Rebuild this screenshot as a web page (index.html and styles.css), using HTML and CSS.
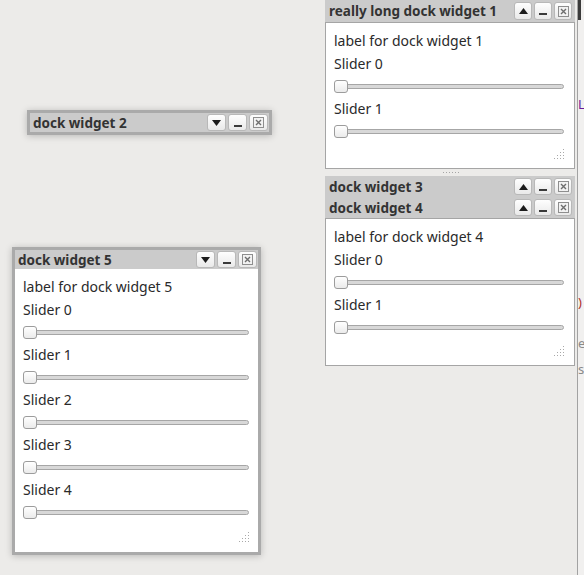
FILE: index.html
```html
<!DOCTYPE html>
<html>
<head>
<meta charset="utf-8">
<link rel="stylesheet" href="styles.css">
</head>
<body>
<div class="screen">
  <div class="main">
    <div class="central"></div>
    <div class="dock-area">
      <section class="dock dock-1">
        <header class="titlebar">
          <span class="title">really long dock widget 1</span>
          <div class="buttons">
            <span class="btn"><svg width="9" height="6" viewBox="0 0 9 6"><path d="M0 6L4.5 0L9 6Z" fill="#1c1c1c"/></svg></span>
            <span class="btn"><svg width="8" height="8" viewBox="0 0 8 8"><rect x="0" y="6" width="8" height="2" fill="#3a3a3a"/></svg></span>
            <span class="btn"><svg width="11" height="11" viewBox="0 0 11 11"><rect x="0.5" y="0.5" width="10" height="10" fill="#f2f2f2" stroke="#8e8e8e"/><path d="M3 3L8 8M8 3L3 8" stroke="#6e6e6e" stroke-width="1.4"/></svg></span>
          </div>
        </header>
        <div class="content">
          <div class="label">label for dock widget 1</div>
          <div class="label">Slider 0</div>
          <div class="slider"><div class="track"></div><div class="handle"></div></div>
          <div class="label">Slider 1</div>
          <div class="slider"><div class="track"></div><div class="handle"></div></div>
          <svg class="grip" width="11" height="11" viewBox="0 0 11 11"><g fill="#a9a9a9"><rect x="10" y="1" width="1" height="1"/><rect x="7" y="4" width="1" height="1"/><rect x="10" y="4" width="1" height="1"/><rect x="4" y="7" width="1" height="1"/><rect x="7" y="7" width="1" height="1"/><rect x="10" y="7" width="1" height="1"/><rect x="1" y="10" width="1" height="1"/><rect x="4" y="10" width="1" height="1"/><rect x="7" y="10" width="1" height="1"/><rect x="10" y="10" width="1" height="1"/></g></svg>
        </div>
      </section>
      <div class="splitter"><span class="dots"></span></div>
      <section class="dock dock-3">
        <header class="titlebar">
          <span class="title">dock widget 3</span>
          <div class="buttons">
            <span class="btn"><svg width="9" height="6" viewBox="0 0 9 6"><path d="M0 6L4.5 0L9 6Z" fill="#1c1c1c"/></svg></span>
            <span class="btn"><svg width="8" height="8" viewBox="0 0 8 8"><rect x="0" y="6" width="8" height="2" fill="#3a3a3a"/></svg></span>
            <span class="btn"><svg width="11" height="11" viewBox="0 0 11 11"><rect x="0.5" y="0.5" width="10" height="10" fill="#f2f2f2" stroke="#8e8e8e"/><path d="M3 3L8 8M8 3L3 8" stroke="#6e6e6e" stroke-width="1.4"/></svg></span>
          </div>
        </header>
      </section>
      <section class="dock dock-4">
        <header class="titlebar">
          <span class="title">dock widget 4</span>
          <div class="buttons">
            <span class="btn"><svg width="9" height="6" viewBox="0 0 9 6"><path d="M0 6L4.5 0L9 6Z" fill="#1c1c1c"/></svg></span>
            <span class="btn"><svg width="8" height="8" viewBox="0 0 8 8"><rect x="0" y="6" width="8" height="2" fill="#3a3a3a"/></svg></span>
            <span class="btn"><svg width="11" height="11" viewBox="0 0 11 11"><rect x="0.5" y="0.5" width="10" height="10" fill="#f2f2f2" stroke="#8e8e8e"/><path d="M3 3L8 8M8 3L3 8" stroke="#6e6e6e" stroke-width="1.4"/></svg></span>
          </div>
        </header>
        <div class="content">
          <div class="label">label for dock widget 4</div>
          <div class="label">Slider 0</div>
          <div class="slider"><div class="track"></div><div class="handle"></div></div>
          <div class="label">Slider 1</div>
          <div class="slider"><div class="track"></div><div class="handle"></div></div>
          <svg class="grip" width="11" height="11" viewBox="0 0 11 11"><g fill="#a9a9a9"><rect x="10" y="1" width="1" height="1"/><rect x="7" y="4" width="1" height="1"/><rect x="10" y="4" width="1" height="1"/><rect x="4" y="7" width="1" height="1"/><rect x="7" y="7" width="1" height="1"/><rect x="10" y="7" width="1" height="1"/><rect x="1" y="10" width="1" height="1"/><rect x="4" y="10" width="1" height="1"/><rect x="7" y="10" width="1" height="1"/><rect x="10" y="10" width="1" height="1"/></g></svg>
        </div>
      </section>
    </div>
    <div class="gutter"></div>
    <div class="edge">
      <div class="edge-top"></div>
      <div class="frag frag-li">Li</div>
      <div class="frag frag-paren">)</div>
      <div class="frag frag-e">e</div>
      <div class="frag frag-s">s</div>
    </div>
  </div>

  <section class="floating float-2">
    <header class="titlebar">
      <span class="title">dock widget 2</span>
      <div class="buttons">
        <span class="btn"><svg width="9" height="6" viewBox="0 0 9 6"><path d="M0 0L4.5 6L9 0Z" fill="#1c1c1c"/></svg></span>
        <span class="btn"><svg width="8" height="8" viewBox="0 0 8 8"><rect x="0" y="6" width="8" height="2" fill="#3a3a3a"/></svg></span>
        <span class="btn"><svg width="11" height="11" viewBox="0 0 11 11"><rect x="0.5" y="0.5" width="10" height="10" fill="#f2f2f2" stroke="#8e8e8e"/><path d="M3 3L8 8M8 3L3 8" stroke="#6e6e6e" stroke-width="1.4"/></svg></span>
      </div>
    </header>
  </section>

  <section class="floating float-5">
    <header class="titlebar">
      <span class="title">dock widget 5</span>
      <div class="buttons">
        <span class="btn"><svg width="9" height="6" viewBox="0 0 9 6"><path d="M0 0L4.5 6L9 0Z" fill="#1c1c1c"/></svg></span>
        <span class="btn"><svg width="8" height="8" viewBox="0 0 8 8"><rect x="0" y="6" width="8" height="2" fill="#3a3a3a"/></svg></span>
        <span class="btn"><svg width="11" height="11" viewBox="0 0 11 11"><rect x="0.5" y="0.5" width="10" height="10" fill="#f2f2f2" stroke="#8e8e8e"/><path d="M3 3L8 8M8 3L3 8" stroke="#6e6e6e" stroke-width="1.4"/></svg></span>
      </div>
    </header>
    <div class="content">
      <div class="label">label for dock widget 5</div>
      <div class="label">Slider 0</div>
      <div class="slider"><div class="track"></div><div class="handle"></div></div>
      <div class="label">Slider 1</div>
      <div class="slider"><div class="track"></div><div class="handle"></div></div>
      <div class="label">Slider 2</div>
      <div class="slider"><div class="track"></div><div class="handle"></div></div>
      <div class="label">Slider 3</div>
      <div class="slider"><div class="track"></div><div class="handle"></div></div>
      <div class="label">Slider 4</div>
      <div class="slider"><div class="track"></div><div class="handle"></div></div>
      <svg class="grip" width="11" height="11" viewBox="0 0 11 11"><g fill="#a9a9a9"><rect x="10" y="1" width="1" height="1"/><rect x="7" y="4" width="1" height="1"/><rect x="10" y="4" width="1" height="1"/><rect x="4" y="7" width="1" height="1"/><rect x="7" y="7" width="1" height="1"/><rect x="10" y="7" width="1" height="1"/><rect x="1" y="10" width="1" height="1"/><rect x="4" y="10" width="1" height="1"/><rect x="7" y="10" width="1" height="1"/><rect x="10" y="10" width="1" height="1"/></g></svg>
    </div>
  </section>
</div>
</body>
</html>
```

FILE: styles.css
```css
* { box-sizing: border-box; margin: 0; padding: 0; }

body {
  margin: 0;
  background: #ecebe9;
  font-family: "Noto Sans", "Open Sans", sans-serif;
  font-size: 14px;
  color: #2a2a2a;
  width: 584px;
  height: 575px;
  overflow: hidden;
}

.screen { position: relative; width: 584px; height: 575px; }

.main { display: flex; height: 575px; }
.central { flex: 0 0 325px; }
.dock-area { flex: 0 0 250px; display: flex; flex-direction: column; }
.gutter { flex: 0 0 2px; }

.edge {
  flex: 0 0 7px;
  border-left: 1px solid #a2a2a2;
  background: #f1f0ef;
  overflow: hidden;
  display: flex;
  flex-direction: column;
  font-size: 13px;
  line-height: 13px;
  white-space: nowrap;
}
.edge-top { height: 20px; width: 3px; background: #3b3b3b; }
.frag { height: 13px; }
.frag-li { margin-top: 78px; color: #6a1b9a; }
.frag-paren { margin-top: 185px; color: #b0302a; }
.frag-e { margin-top: 28px; color: #8a8a8a; }
.frag-s { margin-top: 13px; color: #8a8a8a; }

.titlebar {
  display: flex;
  align-items: center;
  justify-content: space-between;
  background: #cbcbcb;
  padding: 0 3px 0 4px;
}
.dock-area .titlebar { height: 21px; }
.dock-1 .titlebar { height: 22px; }

.title {
  font-weight: 700;
  font-size: 13.5px;
  color: #333;
  white-space: nowrap;
}

.buttons { display: flex; gap: 2px; }

.btn {
  width: 18px;
  height: 18px;
  border: 1px solid #b8b8b8;
  border-radius: 3px;
  background: linear-gradient(#fefefe, #e9e9e9);
  display: flex;
  align-items: center;
  justify-content: center;
}
.dock-3 .btn, .dock-4 .btn { height: 17px; }

.content {
  background: #fff;
  border: 1px solid #a5a5a5;
  display: flex;
  flex-direction: column;
  gap: 6px;
  padding: 9px 10px 9px 8px;
}
.dock-1 .content { height: 147px; }
.dock-4 .content { height: 148px; }

.label { height: 17px; line-height: 17px; white-space: nowrap; }

.slider { position: relative; height: 16px; display: flex; align-items: center; }
.track {
  flex: 1;
  height: 5px;
  border: 1px solid #a6a6a6;
  border-radius: 3px;
  background: #d8d8d8;
}
.handle {
  position: absolute;
  left: 0;
  top: 2px;
  width: 14px;
  height: 13px;
  border: 1px solid #9c9c9c;
  border-radius: 3px;
  background: linear-gradient(#ffffff, #ebebeb);
}

.grip { margin-top: auto; align-self: flex-end; }

.splitter { height: 7px; display: flex; align-items: center; justify-content: center; }
.dots {
  width: 16px;
  height: 1px;
  background: repeating-linear-gradient(90deg, #a5a5a5 0 1px, transparent 1px 3px);
  margin-left: 1px;
}

.floating {
  position: absolute;
  border: 3px solid #aaaaaa;
  background: #cbcbcb;
  box-shadow: 0 1px 7px rgba(0, 0, 0, 0.22);
}
.floating .btn { height: 17px; width: 19px; }

.float-2 { left: 27px; top: 110px; width: 245px; height: 25px; }
.float-2 .titlebar { height: 19px; padding: 0 1px 0 3px; }

.float-5 {
  left: 12px;
  top: 247px;
  width: 249px;
  height: 308px;
  display: flex;
  flex-direction: column;
}
.float-5 .titlebar { height: 19px; padding: 0 1px 0 3px; }
.float-5 .content { border: none; flex: 1; padding: 9px 9px 10px 8px; }
```
